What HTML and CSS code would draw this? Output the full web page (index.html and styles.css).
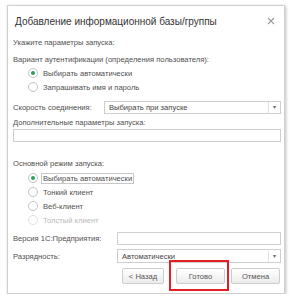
FILE: index.html
```html
<!DOCTYPE html>
<html lang="ru">

<head>
    <meta charset="UTF-8" />
    <meta name="viewport" content="width=device-width, initial-scale=1.0" />
    <title>Добавление информационной базы/группы</title>
    <link rel="stylesheet" href="styles.css">
</head>

<body>
    <div class="dialog">
        <div class="title-bar">
            <span class="title">Добавление информационной базы/группы</span>
            <svg class="close" width="8" height="8" viewBox="0 0 8 8">
                <path d="M1 1 L7 7 M7 1 L1 7" stroke="#9a9a9a" stroke-width="1.1" />
            </svg>
        </div>

        <div class="content">
            <div class="line first">Укажите параметры запуска:</div>
            <div class="line auth">Вариант аутентификации (определения пользователя):</div>
            <div class="radio-row"><span class="radio checked"></span>Выбирать автоматически</div>
            <div class="radio-row"><span class="radio"></span>Запрашивать имя и пароль</div>

            <div class="field-row speed">
                <span class="field-label">Скорость соединения:</span>
                <div class="select">
                    <span class="select-value">Выбирать при запуске</span>
                    <span class="select-arrow">▾</span>
                </div>
            </div>

            <div class="line extra">Дополнительные параметры запуска:</div>
            <div class="input wide"></div>

            <div class="line mode">Основной режим запуска:</div>
            <div class="radio-row mode-first"><span class="radio checked"></span><span class="focused">Выбирать автоматически</span></div>
            <div class="radio-row"><span class="radio"></span>Тонкий клиент</div>
            <div class="radio-row"><span class="radio"></span>Веб-клиент</div>
            <div class="radio-row disabled"><span class="radio"></span>Толстый клиент</div>

            <div class="field-row version">
                <span class="field-label long">Версия 1С:Предприятия:</span>
                <div class="input grow"></div>
            </div>
            <div class="field-row bits">
                <span class="field-label long">Разрядность:</span>
                <div class="select">
                    <span class="select-value">Автоматически</span>
                    <span class="select-arrow">▾</span>
                </div>
            </div>

            <div class="buttons">
                <button class="btn back">&lt; Назад</button>
                <button class="btn done">Готово</button>
                <button class="btn cancel">Отмена</button>
                <div class="highlight"></div>
            </div>
        </div>
    </div>
</body>

</html>
```

FILE: styles.css
```css
body {
    margin: 0;
    background: #ffffff;
    font-family: 'Liberation Sans', Arial, sans-serif;
    color: #4f4f4f;
}

.dialog {
    width: 276px;
    height: 287px;
    margin: 5px 0 0 7px;
    border: 1px solid #d0d0d0;
    background: #ffffff;
    box-shadow: 1px 1px 3px rgba(0, 0, 0, 0.25);
    display: flex;
    flex-direction: column;
}

.title-bar {
    height: 30px;
    display: flex;
    align-items: center;
    justify-content: space-between;
    padding: 0 9px 0 7px;
}

.title {
    font-size: 10px;
    color: #333;
}

.close {
    display: block;
}

.content {
    padding: 0 3px 0 5px;
    display: flex;
    flex-direction: column;
    font-size: 7.6px;
}

.line {
    height: 12px;
    line-height: 12px;
    white-space: nowrap;
}

.first {
    margin-top: 1px;
}

.auth {
    margin-top: 5px;
}

.radio-row {
    height: 14px;
    display: flex;
    align-items: center;
    padding-left: 15px;
    white-space: nowrap;
}

.radio {
    width: 8px;
    height: 8px;
    border: 1px solid #c4c4c4;
    border-radius: 50%;
    margin-right: 5px;
    position: relative;
    background: #fff;
}

.radio.checked::after {
    content: "";
    width: 4px;
    height: 4px;
    border-radius: 50%;
    background: #2e9e5b;
    position: absolute;
    top: 2px;
    left: 2px;
}

.disabled {
    color: #b8b8b8;
}

.disabled .radio {
    border-color: #e2e2e2;
}

.field-row {
    display: flex;
    align-items: center;
    white-space: nowrap;
}

.speed {
    margin-top: 7px;
}

.field-label {
    width: 91px;
    flex-shrink: 0;
}

.field-label.long {
    width: 104px;
}

.select {
    flex: 1;
    height: 11px;
    border: 1px solid #cfcfcf;
    display: flex;
    align-items: center;
    justify-content: space-between;
}

.select-value {
    padding-left: 4px;
    color: #444;
}

.select-arrow {
    width: 11px;
    height: 11px;
    line-height: 11px;
    text-align: center;
    border-left: 1px solid #e0e0e0;
    font-size: 6px;
    color: #666;
}

.extra {
    margin-top: 3px;
}

.input {
    height: 11px;
    border: 1px solid #cfcfcf;
    background: #fff;
}

.grow {
    flex: 1;
}

.mode {
    margin-top: 16px;
}

.mode-first {
    margin-top: 1px;
}

.focused {
    border: 1px solid #c8c8c8;
    padding: 0 1px;
    line-height: 9px;
    margin-left: -2px;
}

.version {
    margin-top: 5px;
}

.bits {
    margin-top: 4px;
}

.bits .select {
    height: 12px;
}

.buttons {
    margin-top: 5px;
    display: flex;
    justify-content: flex-end;
    position: relative;
    padding-right: 1px;
}

.btn {
    height: 16px;
    padding: 0;
    font-family: 'Liberation Sans', Arial, sans-serif;
    font-size: 7.6px;
    color: #555;
    border: 1px solid #cdcdcd;
    border-radius: 2px;
    background: linear-gradient(#ffffff, #ececec);
}

.back {
    width: 42px;
}

.done {
    width: 49px;
    margin-left: 12px;
}

.cancel {
    width: 49px;
    margin-left: 6px;
}

.highlight {
    position: absolute;
    left: 156px;
    top: -8px;
    width: 56px;
    height: 27px;
    border: 2px solid #e31e24;
}
```
